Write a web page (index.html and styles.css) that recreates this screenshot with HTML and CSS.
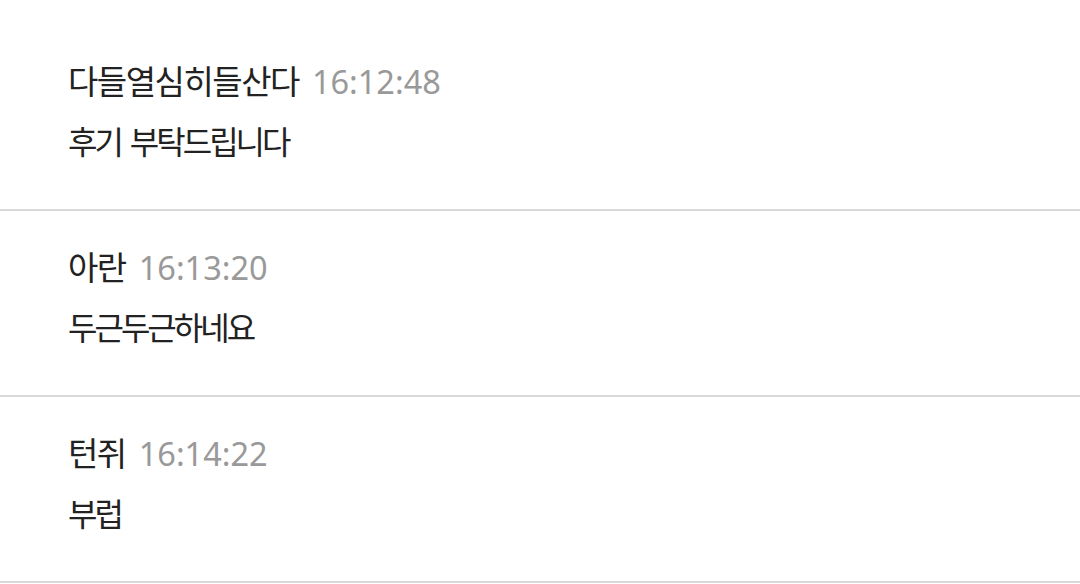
FILE: index.html
```html
<!DOCTYPE html>
<html lang="ko">
<head>
<meta charset="utf-8">
<link rel="stylesheet" href="styles.css">
</head>
<body>
<div class="list">
  <div class="item">
    <div class="head"><span class="name">다들열심히들산다</span><span class="time">16:12:48</span></div>
    <div class="msg">후기 부탁드립니다</div>
  </div>
  <div class="item">
    <div class="head"><span class="name">아란</span><span class="time">16:13:20</span></div>
    <div class="msg">두근두근하네요</div>
  </div>
  <div class="item">
    <div class="head"><span class="name">턴쥐</span><span class="time">16:14:22</span></div>
    <div class="msg">부럽</div>
  </div>
</div>
</body>
</html>
```

FILE: styles.css
```css
html, body {
  margin: 0;
  padding: 0;
  background: #ffffff;
}
body {
  font-family: "Noto Sans CJK KR", "Noto Sans", sans-serif;
  color: #222222;
}
.list {
  padding-top: 25px;
}
.item {
  padding: 33px 68px 47px;
  border-bottom: 2px solid #d9d9d9;
  display: flex;
  flex-direction: column;
  gap: 16px;
}
.head {
  display: flex;
  align-items: baseline;
  gap: 13px;
  height: 44px;
  line-height: 44px;
}
.name {
  font-size: 33px;
  letter-spacing: -1.5px;
}
.time {
  font-size: 32.5px;
  color: #999999;
  font-family: "Noto Sans", sans-serif;
}
.msg {
  font-size: 32px;
  letter-spacing: -3px;
  word-spacing: 3px;
  height: 44px;
  line-height: 44px;
}
```
